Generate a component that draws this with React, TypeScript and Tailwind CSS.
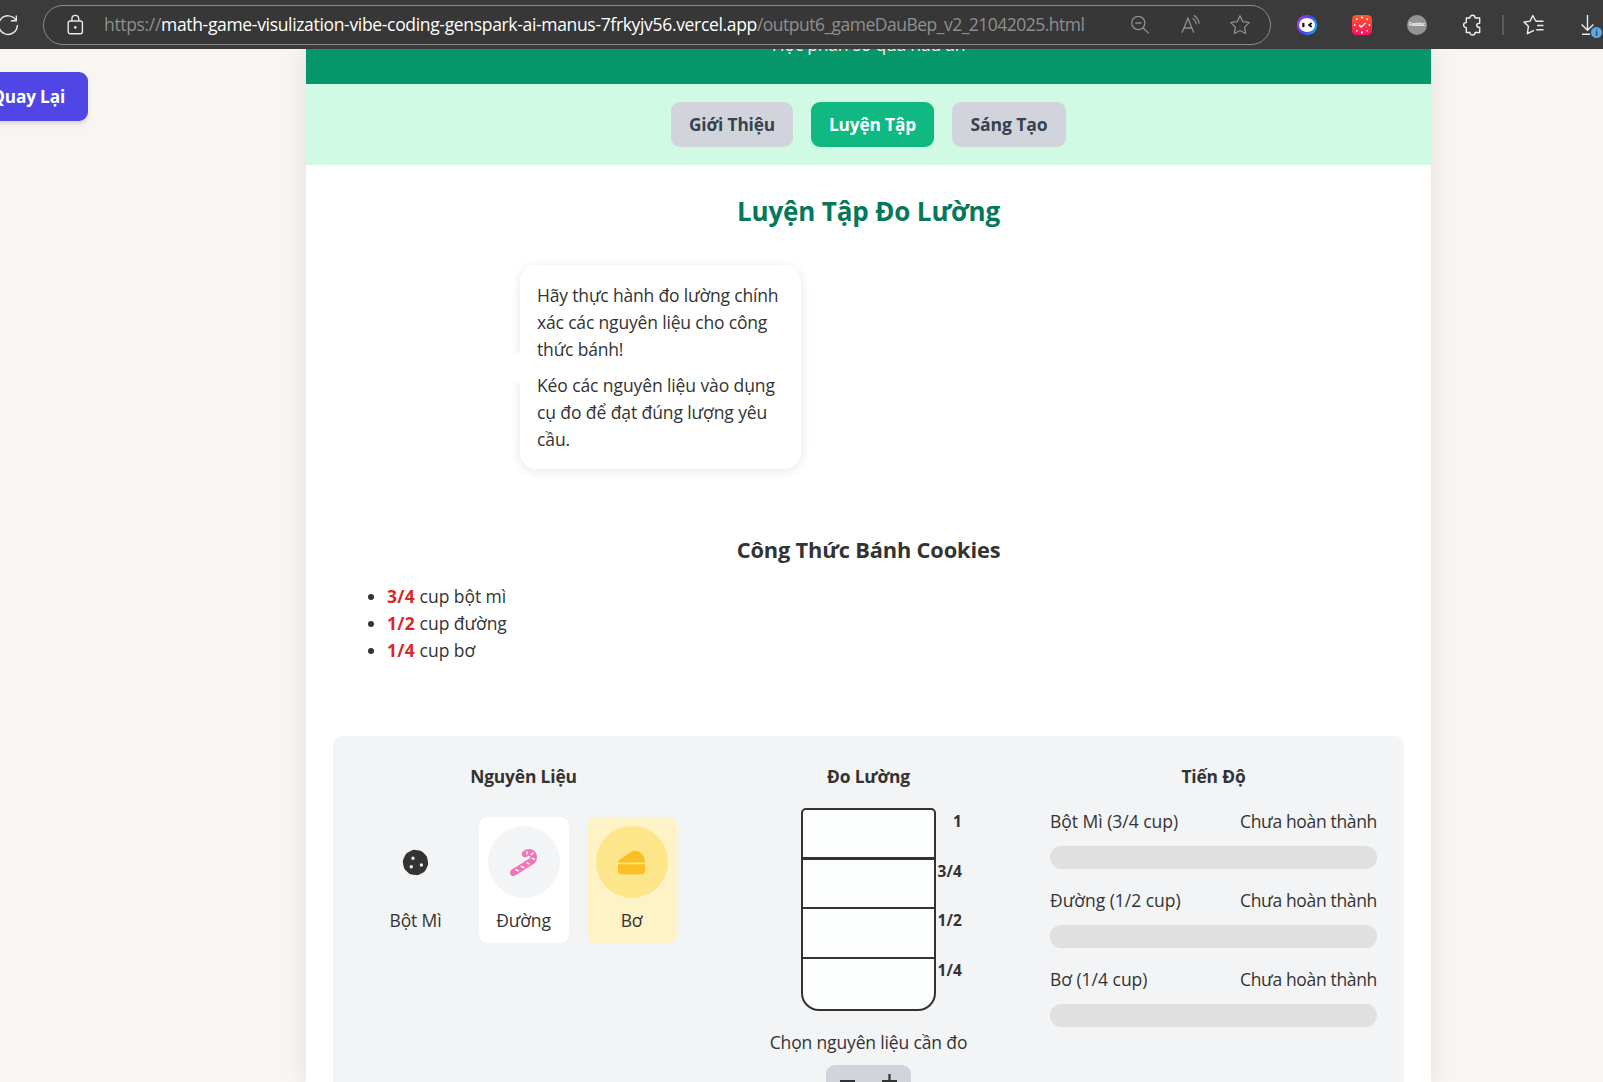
import { ReactNode } from "react";
import { FaCookie, FaCandyCane, FaCheese } from "react-icons/fa6";

function TopBar() {
  return (
    <div className="relative z-10 flex h-[49px] w-full shrink-0 items-center bg-[#3b3b3b] text-white">
      <svg className="-ml-[3px] h-[24px] w-[24px] shrink-0" viewBox="0 0 24 24" fill="none" stroke="#e8e8e8" strokeWidth="1.4">
        <path d="M18.9 7.2A9.3 9.3 0 1 0 20.3 12M19.3 2.600v5.200h-5.400" />
      </svg>
      <div className="ml-[22px] flex h-[40px] w-[1228px] shrink-0 items-center rounded-full border border-[#8c8c8c] bg-[#373737] pl-[23px]">
        <svg className="h-[22px] w-[17px] shrink-0" viewBox="0 0 17 22" fill="none" stroke="#e8e8e8" strokeWidth="1.4">
          <rect x="1.2" y="7" width="14.2" height="12.8" rx="2" />
          <path d="M4.9 7V4.8a3.4 3.4 0 0 1 6.8 0V7" />
          <circle cx="8.3" cy="13.4" r="1.3" fill="#e8e8e8" stroke="none" />
        </svg>
        <p className="ml-[20px] whitespace-nowrap text-[17.5px] tracking-[-0.33px] text-[#8f8f8f]">
          https://
          <span className="text-white">math-game-visulization-vibe-coding-genspark-ai-manus-7frkyjv56.vercel.app</span>
          <span className="tracking-[-0.51px]">/output6_gameDauBep_v2_21042025.html</span>
        </p>
        <div className="mr-[19px] ml-auto flex items-center gap-[28px] text-[#8f8f8f]">
          <svg className="h-[22px] w-[22px]" viewBox="0 0 22 22" fill="none" stroke="currentColor" strokeWidth="1.3">
            <circle cx="9.3" cy="9" r="6.6" />
            <path d="M6.3 9h6M14 13.800l5.600 5.600" />
          </svg>
          <svg className="h-[22px] w-[22px]" viewBox="0 0 22 22" fill="none" stroke="currentColor" strokeWidth="1.3">
            <path d="M3 18.800L8.900 4.200 14.800 18.800M5 14h7.800M13.500 4.200c2.200 1.200 3.500 3.400 3.600 6M14.700 1.400c3.200 1.700 5.200 4.800 5.300 8.400" />
          </svg>
          <svg className="h-[22px] w-[22px]" viewBox="0 0 22 22" fill="none" stroke="currentColor" strokeWidth="1.3" strokeLinejoin="round">
            <path d="M11 1.800l2.900 5.900 6.400.900-4.700 4.500 1.100 6.400L11 16.500l-5.700 3 1.100-6.400L1.700 8.600l6.400-.900z" />
          </svg>
        </div>
      </div>
      <svg className="ml-[25px] h-[22px] w-[22px] shrink-0" viewBox="0 0 22 22">
        <defs>
          <linearGradient id="ring" x1="0" y1="0.4" x2="1" y2="0.8">
            <stop offset="0" stopColor="#a63df0" />
            <stop offset="0.45" stopColor="#4a3cf0" />
            <stop offset="1" stopColor="#19b8f5" />
          </linearGradient>
          <linearGradient id="clock" x1="0" y1="0" x2="0" y2="1">
            <stop offset="0" stopColor="#ff5a26" />
            <stop offset="1" stopColor="#ff0f5e" />
          </linearGradient>
        </defs>
        <circle cx="11" cy="11" r="10.2" fill="url(#ring)" />
        <ellipse cx="11" cy="11" rx="8" ry="7" fill="#fff" />
        <rect x="6.2" y="8.8" width="2.3" height="4.4" rx="1" fill="#111" />
        <path d="M15.700 9l-2.600 2 2.600 2" stroke="#111" strokeWidth="1.8" fill="none" />
      </svg>
      <svg className="ml-[33px] h-[22px] w-[22px] shrink-0" viewBox="0 0 22 22">
        <rect x="1" y="1" width="20" height="20" rx="4.5" fill="url(#clock)" />
        <g fill="#fff">
          <circle cx="11" cy="3.6" r="1.1" /><circle cx="11" cy="18.4" r="1.1" />
          <circle cx="3.6" cy="11" r="1" /><circle cx="18.4" cy="11" r="1" />
          <circle cx="5.8" cy="5.2" r=".9" /><circle cx="16.2" cy="5.2" r=".9" />
          <circle cx="5.8" cy="16.8" r=".9" /><circle cx="16.2" cy="16.8" r=".9" />
        </g>
        <path d="M8 11l2.200 2.100 4.400-4" stroke="#fff" strokeWidth="1.4" fill="none" />
      </svg>
      <div className="ml-[34px] flex h-[20px] w-[20px] shrink-0 items-center justify-center rounded-full bg-[#949494] text-[4.5px] font-bold tracking-[-0.2px]">
        Fastdoc
      </div>
      <svg className="ml-[35px] h-[24px] w-[22px] shrink-0" viewBox="0 0 22 24" fill="none" stroke="#ededed" strokeWidth="1.4" strokeLinejoin="round">
        <path d="M4.300 5h3.600c0-3.600 5.200-3.600 5.200 0h4.600v5.200c-4 0-4 4.300 0 4.300v5h-4.600c0 3.400-5.200 3.400-5.200 0H4.300v-4.900c-3.600 0-3.600-5 0-5z" />
      </svg>
      <div className="ml-[18px] h-[20px] w-[2px] shrink-0 bg-[#5c5c5c]" />
      <svg className="ml-[19px] h-[22px] w-[22px] shrink-0" viewBox="0 0 22 22" fill="none" stroke="#ededed" strokeWidth="1.4" strokeLinejoin="round">
        <path d="M13 7.300h7.500M14 11.500h6.500M13.200 15.700h7.300M13 7.300l-3.200-5.800L7.100 7.100l-6.200 1 4.500 4.200-1 7.400 6.600-3.400" />
      </svg>
      <div className="relative ml-[34px] h-[24px] w-[24px] shrink-0">
        <svg className="h-[24px] w-[24px]" viewBox="0 0 24 24" fill="none" stroke="#ededed" strokeWidth="1.4">
          <path d="M8.500 2v15M2.600 11.400l5.900 5.800 5.900-5.800M3 21.300h8" />
        </svg>
        <span className="absolute top-[14px] left-[12px] flex h-[11px] w-[11px] items-center justify-center rounded-full bg-[#5aa9e6] text-[9px] leading-none font-bold text-[#264d75]">
          i
        </span>
      </div>
    </div>
  );
}

function Ingredient({ card, disc, color, icon, name }: { card: string; disc: string; color: string; icon: ReactNode; name: string }) {
  return (
    <div className={`flex h-[126px] w-[90px] flex-col items-center rounded-[9px] pt-[9px] ${card}`}>
      <div className={`flex h-[72px] w-[72px] items-center justify-center rounded-full ${disc} ${color}`}>{icon}</div>
      <p className="mt-[9px]">{name}</p>
    </div>
  );
}

const heading = "text-center text-[17.4px] font-bold";
const amount = "text-[17.4px] tracking-[0.35px] text-[#dc2626]";

const marks = [
  { label: "1", cls: "h-[50px] border-b-[3px]" },
  { label: "3/4", cls: "h-[49px] border-b-2" },
  { label: "1/2", cls: "h-[50px] border-b-2" },
  { label: "1/4", cls: "h-[50px]" },
];

const progress = ["Bột Mì (3/4 cup)", "Đường (1/2 cup)", "Bơ (1/4 cup)"];

export default function App() {
  return (
    <div className="relative flex h-[1082px] w-[1603px] flex-col overflow-hidden bg-[#f9f5f2] font-['Open_Sans',sans-serif] text-[17.5px] leading-[27px] tracking-[-0.15px] text-[#333]">
      <TopBar />
      <button className="absolute top-[72px] -left-[70px] h-[49px] w-[158px] rounded-[9px] bg-[#4f46e5] pr-[23px] text-right text-[17.2px] font-bold text-white shadow-md">
        Quay Lại
      </button>

      <main className="ml-[306px] min-h-0 w-[1125px] flex-1 bg-white shadow-[0_0_22px_rgba(0,0,0,0.1)]">
        <header className="flex h-[35px] items-start justify-center bg-[#059669] text-[#e9f7f1]">
          <p className="-mt-[18px] tracking-[-0.2px]">Học phân số qua nấu ăn</p>
        </header>
        <nav className="flex h-[81px] items-center justify-center gap-[18px] bg-[#d1fae5] text-[17.3px] font-bold text-[#374151]">
          <button className="h-[45px] w-[122px] rounded-[9px] bg-[#d1d5db]">Giới Thiệu</button>
          <button className="h-[45px] w-[123px] rounded-[9px] bg-[#10b981] text-white">Luyện Tập</button>
          <button className="h-[45px] w-[114px] rounded-[9px] bg-[#d1d5db] text-[17.6px]">Sáng Tạo</button>
        </nav>

        <section className="px-[27px] pt-[26px]">
          <h2 className="text-center text-[26px] leading-[40px] font-bold tracking-[-0.15px] text-[#047857]">Luyện Tập Đo Lường</h2>

          <div className="relative mt-[34px] ml-[187px] h-[204px] w-[281px] rounded-[17px] bg-white px-[17px] pt-[17px] shadow-[0_2px_11px_rgba(0,0,0,0.1)]">
            <div className="absolute top-[86px] -left-[17px] border-y-[17px] border-r-[17px] border-y-transparent border-r-white" />
            <p className="w-[250px] tracking-[-0.17px]">Hãy thực hành đo lường chính<br />xác các nguyên liệu cho công<br />thức bánh!</p>
            <p className="mt-[9px] w-[250px] tracking-[-0.1px]">Kéo các nguyên liệu vào dụng<br />cụ đo để đạt đúng lượng yêu<br />cầu.</p>
          </div>

          <h3 className="mt-[65px] text-center text-[21.8px] leading-[32px] font-bold tracking-[-0.15px]">Công Thức Bánh Cookies</h3>
          <ul className="mt-[17px] ml-[54px] list-disc tracking-[-0.05px]">
            <li><b className={amount}>3/4</b> cup bột mì</li>
            <li><b className={amount}>1/2</b> cup đường</li>
            <li><b className={amount}>1/4</b> cup bơ</li>
          </ul>

          <div className="mt-[72px] grid h-[420px] grid-cols-3 gap-[18px] rounded-[9px] bg-[#f3f4f6] p-[27px]">
            <div>
              <h4 className={heading}>Nguyên Liệu</h4>
              <div className="mt-[27px] flex justify-center gap-[18px]">
                <Ingredient card="" disc="" color="text-[#333]" icon={<FaCookie size={27} />} name="Bột Mì" />
                <Ingredient card="bg-white" disc="bg-[#f3f4f6]" color="text-[#f472b6]" icon={<FaCandyCane size={27} />} name="Đường" />
                <Ingredient card="bg-[#fef3c7]" disc="bg-[#fde68a]" color="text-[#fbbf24]" icon={<FaCheese size={27} />} name="Bơ" />
              </div>
            </div>

            <div className="flex flex-col items-center">
              <h4 className={heading}>Đo Lường</h4>
              <div className="mt-[18px] h-[203px] w-[135px] rounded-t-[5px] rounded-b-[18px] border-2 border-[#333] bg-[#fcfefd]">
                {marks.map((m) => (
                  <div key={m.label} className={`relative w-[131px] border-[#333] ${m.cls}`}>
                    <span className="absolute top-0 -right-[28px] text-[15.5px] leading-[23px] font-bold tracking-[0.1px]">{m.label}</span>
                  </div>
                ))}
              </div>
              <p className="mt-[18px]">Chọn nguyên liệu cần đo</p>
              <div className="mt-[9px] flex h-[36px] w-[85px] rounded-[9px] bg-[#d1d5db]">
                <svg className="h-[36px] w-[85px]" viewBox="0 0 85 36" stroke="#333" strokeWidth="2.2">
                  <path d="M14 16h15M56 16h15M63.500 9v15" />
                </svg>
              </div>
            </div>

            <div>
              <h4 className={heading}>Tiến Độ</h4>
              <div className="mt-[18px] flex flex-col gap-[18px]">
                {progress.map((label) => (
                  <div key={label}>
                    <div className="flex justify-between">
                      <span className="tracking-[-0.02px]">{label}</span>
                      <span className="tracking-[-0.34px]">Chưa hoàn thành</span>
                    </div>
                    <div className="mt-[11px] h-[23px] rounded-full bg-[#e0e0e0]" />
                  </div>
                ))}
              </div>
            </div>
          </div>
        </section>
      </main>
    </div>
  );
}
